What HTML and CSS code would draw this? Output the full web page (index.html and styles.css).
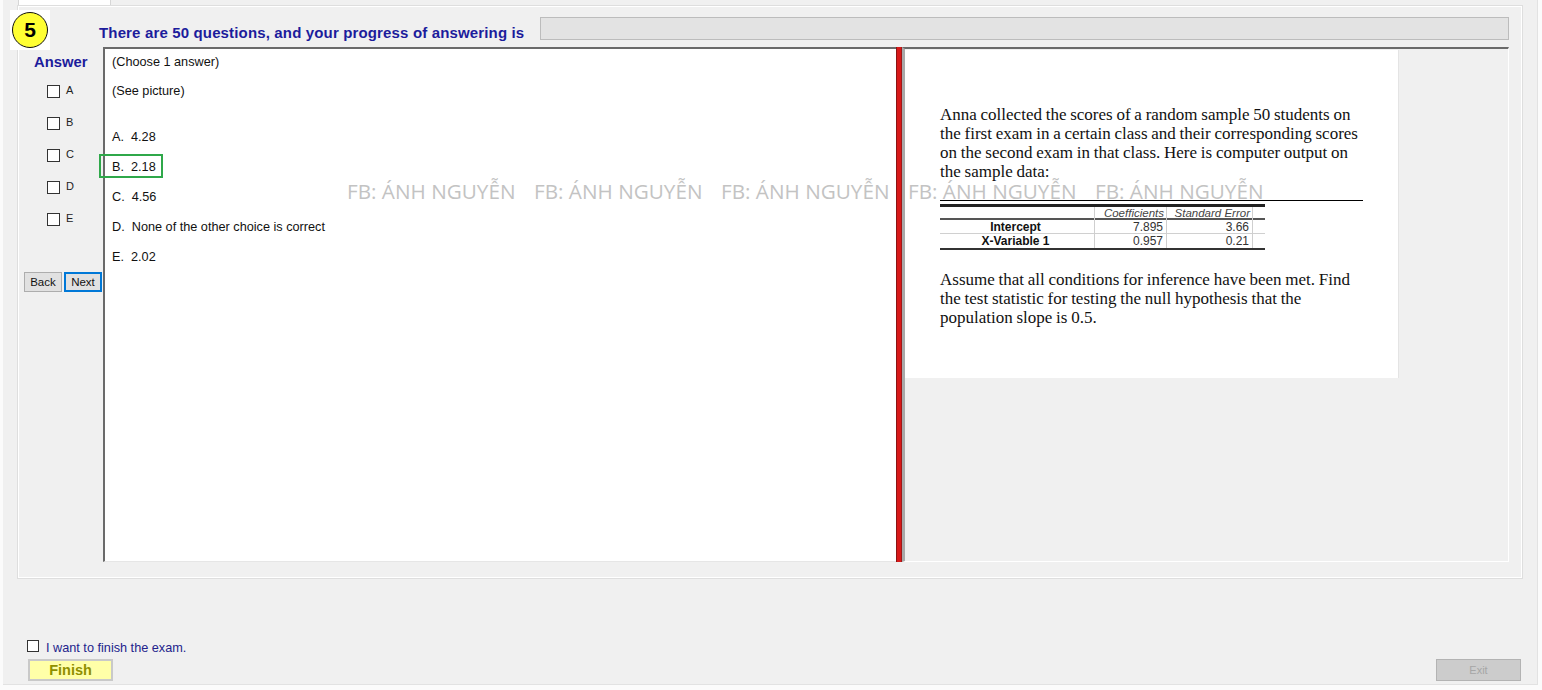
FILE: index.html
```html
<!DOCTYPE html>
<html>
<head>
<meta charset="utf-8">
<title>Exam</title>
<link rel="stylesheet" href="styles.css">
</head>
<body>
<div class="page">
  <div class="tabstrip"><div class="tab"></div></div>
  <div class="badge"><div class="circle">5</div></div>
  <div class="panel">
    <div class="header">
      <div class="title">There are 50 questions, and your progress of answering is</div>
      <div class="progress"></div>
    </div>
    <div class="main">
      <div class="sidebar">
        <div class="answer-title">Answer</div>
        <div class="choices">
          <div class="choice"><span class="box"></span><span class="letter">A</span></div>
          <div class="choice"><span class="box"></span><span class="letter">B</span></div>
          <div class="choice"><span class="box"></span><span class="letter">C</span></div>
          <div class="choice"><span class="box"></span><span class="letter">D</span></div>
          <div class="choice"><span class="box"></span><span class="letter">E</span></div>
        </div>
        <div class="nav">
          <div class="btn">Back</div>
          <div class="btn btn-next">Next</div>
        </div>
      </div>
      <div class="question">
        <div class="q-line q-first">(Choose 1 answer)</div>
        <div class="q-line">(See picture)</div>
        <div class="q-spacer"></div>
        <div class="q-line">A.&nbsp; 4.28</div>
        <div class="q-line">B.&nbsp; 2.18</div>
        <div class="q-line">C.&nbsp; 4.56</div>
        <div class="q-line">D.&nbsp; None of the other choice is correct</div>
        <div class="q-line">E.&nbsp; 2.02</div>
        <div class="highlight"></div>
      </div>
      <div class="divider"></div>
      <div class="pane">
        <div class="picture">
          <div class="pl">Anna collected the scores of a random sample 50 students on</div>
          <div class="pl">the first exam in a certain class and their corresponding scores</div>
          <div class="pl">on the second exam in that class. Here is computer output on</div>
          <div class="pl">the sample data:</div>
          <div class="rule"></div>
          <div class="stats">
            <div class="srow shead">
              <div class="c1"></div><div class="c2">Coefficients</div><div class="c3">Standard Error</div><div class="c4"></div>
            </div>
            <div class="srow sdata sfirst">
              <div class="c1">Intercept</div><div class="c2">7.895</div><div class="c3">3.66</div><div class="c4"></div>
            </div>
            <div class="srow sdata slast">
              <div class="c1">X-Variable 1</div><div class="c2">0.957</div><div class="c3">0.21</div><div class="c4"></div>
            </div>
          </div>
          <div class="pl pl-gap">Assume that all conditions for inference have been met. Find</div>
          <div class="pl">the test statistic for testing the null hypothesis that the</div>
          <div class="pl">population slope is 0.5.</div>
        </div>
      </div>
    </div>
  </div>
  <div class="footer">
    <div class="finish-check"><span class="box"></span><span class="finish-label">I want to finish the exam.</span></div>
    <div class="footer-buttons">
      <div class="finish-btn">Finish</div>
      <div class="exit-btn">Exit</div>
    </div>
  </div>
  <div class="watermark">
    <span>FB: ÁNH NGUYỄN</span><span>FB: ÁNH NGUYỄN</span><span>FB: ÁNH NGUYỄN</span><span>FB: ÁNH NGUYỄN</span><span>FB: ÁNH NGUYỄN</span>
  </div>
</div>
</body>
</html>
```

FILE: styles.css
```css
* { box-sizing: border-box; }
body {
  margin: 0;
  background: #fbfbfb;
  font-family: "Liberation Sans", Arial, sans-serif;
}
.page {
  position: relative;
  margin-left: 3px;
  width: 1535px;
  height: 685px;
  background: #f0f0f0;
  border-right: 1px solid #e2e2e2;
  border-bottom: 1px solid #e2e2e2;
}
.tabstrip {
  height: 6px;
  padding-left: 15px;
}
.tab {
  width: 93px;
  height: 6px;
  background: #fff;
  border-left: 1px solid #d6d6d6;
  border-right: 1px solid #d6d6d6;
}
.badge {
  position: absolute;
  left: 7px;
  top: 10px;
  width: 40px;
  height: 40px;
  background: #fff;
  display: flex;
  align-items: center;
  justify-content: center;
}
.circle {
  width: 36px;
  height: 36px;
  border-radius: 50%;
  background: #ffff33;
  border: 1.5px solid #111;
  display: flex;
  align-items: center;
  justify-content: center;
  font-weight: bold;
  font-size: 21px;
  color: #000;
}
.panel {
  margin-left: 15px;
  width: 1504px;
  height: 572px;
  border: 1px solid #fff;
  box-shadow: 0 0 0 1px #dedede;
  padding: 0 12px 0 5px;
}
.header {
  display: flex;
  align-items: flex-start;
  height: 40px;
  padding-top: 10px;
}
.title {
  margin-left: 75px;
  margin-top: 7px;
  font-size: 15px;
  letter-spacing: 0.15px;
  line-height: 17px;
  font-weight: bold;
  color: #1c1c9c;
  white-space: nowrap;
}
.progress {
  flex: 1;
  margin-left: 16px;
  height: 23px;
  background: #e3e3e3;
  border: 1px solid #bcbcbc;
}
.main {
  display: flex;
  height: 515px;
}
.sidebar {
  width: 79px;
  flex: none;
}
.answer-title {
  margin-top: 7px;
  padding-left: 10px;
  font-size: 14.8px;
  line-height: 17px;
  font-weight: bold;
  color: #1c1c9c;
}
.choices {
  margin-top: 14px;
}
.choice {
  display: flex;
  align-items: flex-start;
  height: 32px;
  padding-left: 23px;
}
.box {
  display: block;
  width: 13px;
  height: 13px;
  background: #fff;
  border: 1px solid #333;
  flex: none;
}
.letter {
  margin-left: 6px;
  margin-top: -1px;
  font-size: 11px;
  line-height: 12px;
  color: #222;
}
.nav {
  display: flex;
  gap: 2px;
  margin-top: 27px;
}
.btn {
  width: 38px;
  height: 20px;
  background: #e1e1e1;
  border: 1px solid #adadad;
  font-size: 11.5px;
  line-height: 18px;
  text-align: center;
  color: #111;
}
.btn-next {
  border-color: #0078d7;
  box-shadow: inset 0 0 0 1px #0078d7;
}
.question {
  position: relative;
  width: 793px;
  flex: none;
  background: #fff;
  border-top: 2px solid #6a6a6a;
  border-left: 2px solid #6a6a6a;
  border-bottom: 1px solid #e6e6e6;
}
.q-line {
  padding-left: 7px;
  height: 30px;
  line-height: 30px;
  font-size: 12.7px;
  color: #111;
  white-space: nowrap;
}
.q-first {
  height: 27px;
  line-height: 27px;
}
.q-spacer {
  height: 16px;
}
.highlight {
  position: absolute;
  left: -6px;
  top: 105px;
  width: 64px;
  height: 24px;
  border: 2px solid #2fa84a;
}
.divider {
  width: 6px;
  flex: none;
  background: #d81919;
  border-left: 1px solid #8a1414;
  border-right: 1px solid #a01818;
}
.pane {
  flex: 1;
  border-top: 2px solid #6a6a6a;
  border-left: 3px solid #a9a9a9;
  border-right: 1px solid #fff;
  border-bottom: 1px solid #fff;
  padding-top: 1px;
  background: #f0f0f0;
}
.picture {
  width: 492px;
  height: 328px;
  background: #fff;
  box-shadow: 1px 0 0 #fff, 2px 0 0 #e4e4e4;
  padding: 55px 0 0 35px;
  font-family: "Liberation Serif", "Times New Roman", serif;
  font-size: 17px;
  line-height: 19px;
  color: #111;
  word-spacing: -0.5px;
}
.pl {
  white-space: nowrap;
}
.pl-gap {
  margin-top: 20px;
}
.rule {
  width: 423px;
  height: 1px;
  background: #000;
  margin-top: 19px;
}
.stats {
  margin-top: 3px;
  width: 325px;
  border-top: 3px solid #222;
  border-bottom: 2px solid #333;
  font-family: "Liberation Sans", Arial, sans-serif;
  font-size: 12px;
  word-spacing: 0;
}
.srow {
  display: grid;
  grid-template-columns: 155px 72px 86px 12px;
}
.srow > div {
  border-right: 1px solid #cfcfcf;
  padding-right: 3px;
  text-align: right;
  color: #333;
}
.srow > .c1 {
  text-align: center;
  font-weight: bold;
  color: #111;
}
.srow > .c4 {
  border-right: 0;
}
.shead {
  height: 13px;
  line-height: 13px;
  border-bottom: 2px solid #555;
  font-style: italic;
  font-size: 11.5px;
}
.shead > div {
  color: #444;
  padding-right: 2px;
}
.sdata {
  height: 14px;
  line-height: 14px;
}
.sfirst {
  border-bottom: 1px solid #d0d0d0;
}
.footer {
  margin-top: 62px;
  padding: 0 16px 0 24px;
}
.finish-check {
  display: flex;
  align-items: flex-start;
  height: 16px;
}
.finish-check .box {
  width: 12px;
  height: 12px;
}
.finish-label {
  margin-left: 7px;
  margin-top: 1px;
  font-size: 12.7px;
  line-height: 14px;
  color: #23238c;
}
.footer-buttons {
  display: flex;
  justify-content: space-between;
  margin-top: 3px;
  padding-left: 1px;
}
.finish-btn {
  width: 85px;
  height: 22px;
  background: #ffffa8;
  border: 2px solid #c9c9c9;
  font-size: 14.5px;
  font-weight: bold;
  line-height: 18px;
  text-align: center;
  color: #8f8f00;
}
.exit-btn {
  width: 85px;
  height: 22px;
  background: #cccccc;
  border: 1px solid #b3b3b3;
  font-size: 11px;
  line-height: 20px;
  text-align: center;
  color: #a6a6a6;
}
.watermark {
  position: absolute;
  left: 344px;
  top: 177px;
  display: flex;
  font-family: "Open Sans", "Noto Sans", sans-serif;
  font-size: 20.7px;
  line-height: 28px;
  color: #c3c3c3;
  white-space: nowrap;
  pointer-events: none;
}
.watermark span {
  width: 187px;
}
```
